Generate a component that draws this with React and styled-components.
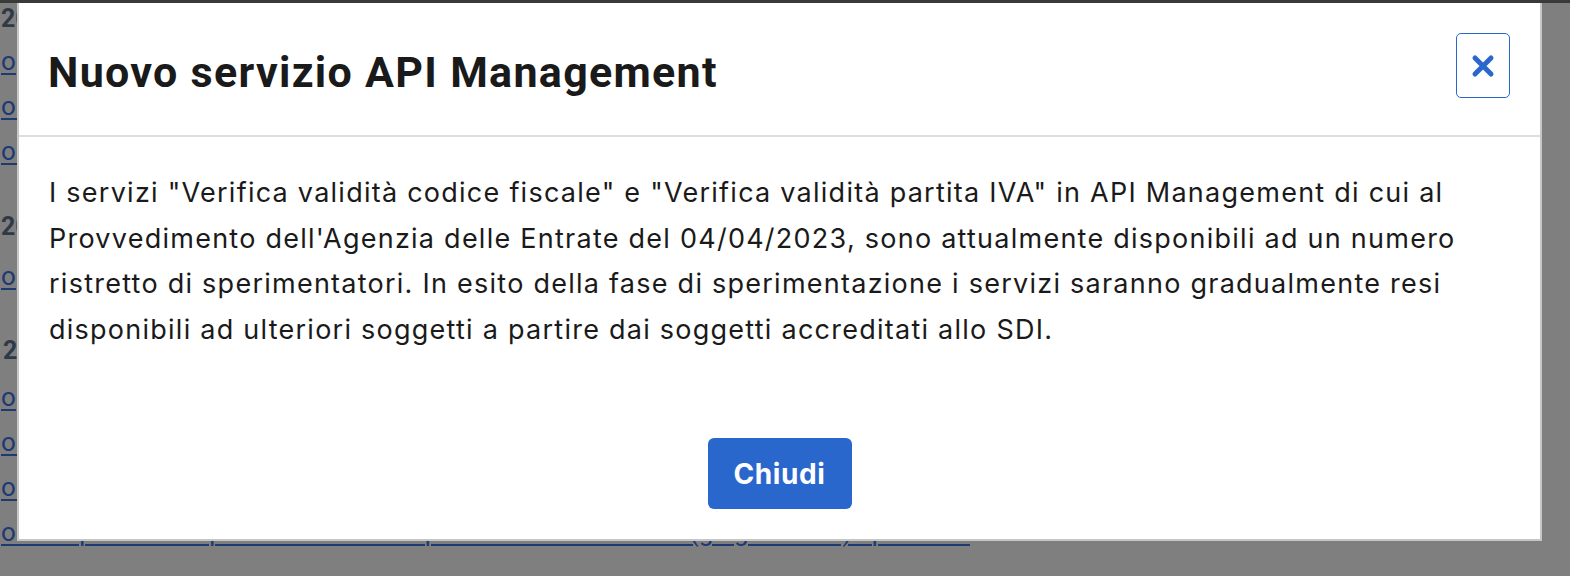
import React from "react";
import styled, { createGlobalStyle } from "styled-components";

const GlobalStyle = createGlobalStyle`
  html, body { margin: 0; padding: 0; background: #ffffff; }
  body { font-family: Inter, "Noto Sans", sans-serif; overflow: hidden; }
  * { box-sizing: border-box; }
`;

const Page = styled.div`
  width: 1570px;
  height: 576px;
  overflow: hidden;
`;

const TopBar = styled.div`
  height: 3px;
  background: #747474;
`;

const Archive = styled.div`
  display: flex;
  flex-direction: column;
  padding-left: 1px;
  font-family: Roboto, "Liberation Sans", sans-serif;
`;

const Year = styled.h2`
  margin: ${(p) => p.$top}px 0 ${(p) => p.$bottom}px ${(p) => p.$indent || 0}px;
  font-size: 25px;
  line-height: 31px;
  font-weight: 700;
  color: #5e7490;
`;

const DocLink = styled.a`
  display: block;
  white-space: nowrap;
  font-size: 26px;
  line-height: 45px;
  color: #3a74e6;
  text-decoration: underline;
  text-decoration-thickness: 2px;
  text-underline-offset: 3px;
`;

const Backdrop = styled.div`
  position: fixed;
  inset: 0;
  background: rgba(0, 0, 0, 0.5);
  padding: 3px 28px 0 17px;
`;

const Dialog = styled.div`
  width: 1525px;
  background: #ffffff;
  background-clip: padding-box;
  border: 2px solid #c6c6c6;
  border-top: 0;
  display: flex;
  flex-direction: column;
`;

const Header = styled.div`
  height: 134px;
  display: flex;
  justify-content: space-between;
  align-items: flex-start;
  padding: 30px 30px 0 29px;
  border-bottom: 2px solid #dedede;
`;

const Title = styled.h1`
  margin: 18px 0 0;
  font-family: Roboto, "Liberation Sans", sans-serif;
  font-size: 43px;
  line-height: 43px;
  font-weight: 700;
  letter-spacing: 1.3px;
  color: #1a1a1a;
`;

const CloseButton = styled.button`
  width: 54px;
  height: 65px;
  display: flex;
  align-items: center;
  justify-content: center;
  padding: 0;
  background: #ffffff;
  border: 1.5px solid #2a67cc;
  border-radius: 5px;
  cursor: pointer;
`;

const Body = styled.div`
  padding: 33px 30px 33px 30px;
  font-family: Inter, "Noto Sans", sans-serif;
  font-size: 27px;
  line-height: 45.5px;
  letter-spacing: 1.25px;
  color: #1a1a1a;
`;

const Text = styled.p`
  margin: 0;
`;

const Footer = styled.div`
  display: flex;
  justify-content: center;
  padding: 53px 30px 30px;
`;

const PrimaryButton = styled.button`
  width: 144px;
  height: 71px;
  border: 0;
  border-radius: 6px;
  background: #2967cc;
  color: #ffffff;
  font-family: Inter, "Noto Sans", sans-serif;
  font-size: 28px;
  font-weight: 700;
  letter-spacing: 0.6px;
  cursor: pointer;
`;

const CloseIcon = () => (
  <svg width="24" height="24" viewBox="0 0 24 24" aria-hidden="true">
    <path
      d="M4 4 L20 20 M20 4 L4 20"
      stroke="#2a67cc"
      strokeWidth="5"
      strokeLinecap="round"
      fill="none"
    />
  </svg>
);

export default function App() {
  return (
    <Page>
      <GlobalStyle />
      <TopBar />
      <Archive>
        <Year $top={0} $bottom={5}>2024</Year>
        <DocLink href="#">operatività servizi telematici</DocLink>
        <DocLink href="#">orari di assistenza</DocLink>
        <DocLink href="#">osservatorio servizi</DocLink>
        <Year $top={37} $bottom={12}>2023</Year>
        <DocLink href="#">operazioni di manutenzione programmata</DocLink>
        <Year $top={36} $bottom={9} $indent={2}>2022</Year>
        <DocLink href="#">operatività dei canali</DocLink>
        <DocLink href="#">organizzazione del servizio</DocLink>
        <DocLink href="#">obblighi di comunicazione</DocLink>
        <DocLink href="#">
          ora disponibili le specifiche tecniche per l'accesso ai servizi (giugno 2023) - pdf 1MB
        </DocLink>
      </Archive>
      <Backdrop>
        <Dialog role="dialog" aria-modal="true">
          <Header>
            <Title>Nuovo servizio API Management</Title>
            <CloseButton aria-label="Chiudi finestra">
              <CloseIcon />
            </CloseButton>
          </Header>
          <Body>
            <Text>
              I servizi "Verifica validità codice fiscale" e "Verifica validità partita IVA" in API Management di cui al
              Provvedimento dell'Agenzia delle Entrate del 04/04/2023, sono attualmente disponibili ad un numero
              ristretto di sperimentatori. In esito della fase di sperimentazione i servizi saranno gradualmente resi
              disponibili ad ulteriori soggetti a partire dai soggetti accreditati allo SDI.
            </Text>
          </Body>
          <Footer>
            <PrimaryButton>Chiudi</PrimaryButton>
          </Footer>
        </Dialog>
      </Backdrop>
    </Page>
  );
}
